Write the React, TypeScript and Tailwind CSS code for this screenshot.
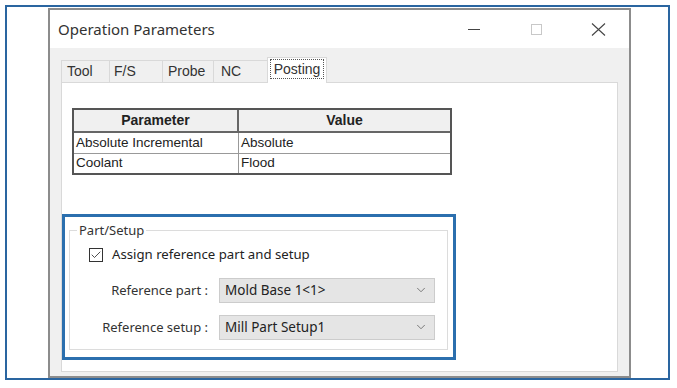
import { Check, ChevronDown } from 'lucide-react';

const ui = { fontFamily: '"Noto Sans", "Open Sans", sans-serif' };
const arial = { fontFamily: '"Liberation Sans", Arial, sans-serif' };

function Combo({ value }: { value: string }) {
  return (
    <div className="flex h-[25px] w-[216px] items-center justify-between border border-[#cccccc] bg-[#e5e5e5] pl-[5px] pr-[6px] text-[13.5px] text-[#222]">
      <span>{value}</span>
      <ChevronDown size={14} strokeWidth={1.5} className="text-[#6a6a6a]" />
    </div>
  );
}

export default function App() {
  const tabs = [
    { label: 'Tool', w: 'w-[48px] pl-[5px]' },
    { label: 'F/S', w: 'w-[53px] pl-[4px]' },
    { label: 'Probe', w: 'w-[51px] pl-[5px]' },
    { label: 'NC', w: 'w-[54px] pl-[7px]' },
  ];

  return (
    <div className="h-[388px] w-[677px] overflow-hidden bg-white pl-[5px] pt-[5px]" style={ui}>
      <div className="h-[375px] w-[665px] overflow-hidden border-2 border-[#2a65a0] bg-white pl-[41px] pt-px">
        <div className="flex h-[370px] w-[583px] flex-col border-2 border-[#8c8c8c] bg-[#f0f0f0]">
          {/* title bar */}
          <div className="flex h-[38px] shrink-0 items-center bg-white">
            <span className="pl-[8px] text-[15px] text-[#333]">Operation Parameters</span>
            <div className="ml-auto flex h-full">
              <div className="flex w-[62px] items-center justify-center">
                <div className="h-px w-[12px] bg-[#444]" />
              </div>
              <div className="flex w-[62px] items-center justify-center">
                <div className="h-[11px] w-[11px] border border-[#c8c8c8]" />
              </div>
              <div className="flex w-[62px] items-center justify-center">
                <svg width="15" height="13" viewBox="0 0 15 13">
                  <path d="M1 0.5 L14 12.5 M14 0.5 L1 12.5" stroke="#444" strokeWidth="1.1" fill="none" />
                </svg>
              </div>
            </div>
          </div>

          {/* body */}
          <div className="flex flex-1 flex-col pl-[11px] pt-[9px]">
            <div className="relative z-10 flex items-end text-[14px] text-[#333]" style={arial}>
              {tabs.map((t) => (
                <div
                  key={t.label}
                  className={`flex h-[22px] items-center border-l border-t border-[#d9d9d9] bg-[#f0f0f0] ${t.w}`}
                >
                  {t.label}
                </div>
              ))}
              <div className="-mb-px flex h-[26px] w-[60px] items-start justify-center border-x border-t border-[#d9d9d9] bg-white pt-[1px]">
                <span className="border border-dotted border-[#555] px-[3px] leading-[18px]">Posting</span>
              </div>
            </div>

            <div className="h-[290px] w-[557px] border border-[#d9d9d9] bg-white">
              {/* table */}
              <div className="ml-[10px] mt-[25px] w-[380px] border-2 border-[#555] text-[13.5px] text-[#222]" style={arial}>
                <div className="flex h-[23px] border-b-2 border-[#666] bg-[#f0f0f0] text-[14px] font-bold">
                  <div className="flex w-[165px] items-center justify-center border-r-2 border-[#666]">Parameter</div>
                  <div className="flex flex-1 items-center justify-center">Value</div>
                </div>
                {[
                  ['Absolute Incremental', 'Absolute'],
                  ['Coolant', 'Flood'],
                ].map(([p, v], i) => (
                  <div key={p} className={`flex h-[20px] border-[#999] ${i > 0 ? 'border-t' : ''}`}>
                    <div className="flex w-[165px] items-center border-r border-[#999] pl-[2px]">{p}</div>
                    <div className="flex flex-1 items-center pl-[2px]">{v}</div>
                  </div>
                ))}
              </div>

              {/* highlighted group */}
              <div className="mt-[39px] h-[146px] w-[394px] border-[3px] border-[#2b6fae] pl-[4px] pt-[6px]">
                <div className="relative mt-[7px] h-[120px] w-[379px] border border-[#dcdcdc]">
                  <span className="absolute -top-[10px] left-[7px] bg-white px-[2px] text-[13px] leading-[18px] text-[#333]">
                    Part/Setup
                  </span>
                  <div className="flex items-center pl-[19px] pt-[14px] text-[13.2px] text-[#222]">
                    <div className="flex h-[14px] w-[14px] items-center justify-center border border-[#333] bg-white">
                      <Check size={12} strokeWidth={1.6} className="text-[#222]" />
                    </div>
                    <span className="pl-[9px]">Assign reference part and setup</span>
                  </div>
                  <div className="mt-[13px] flex flex-col gap-[12px] text-[13px] text-[#333]">
                    <div className="flex items-center">
                      <span className="w-[138px] text-right">Reference part :</span>
                      <div className="ml-[11px]">
                        <Combo value="Mold Base 1<1>" />
                      </div>
                    </div>
                    <div className="flex items-center">
                      <span className="w-[138px] text-right">Reference setup :</span>
                      <div className="ml-[11px]">
                        <Combo value="Mill Part Setup1" />
                      </div>
                    </div>
                  </div>
                </div>
              </div>
            </div>
          </div>
        </div>
      </div>
    </div>
  );
}
